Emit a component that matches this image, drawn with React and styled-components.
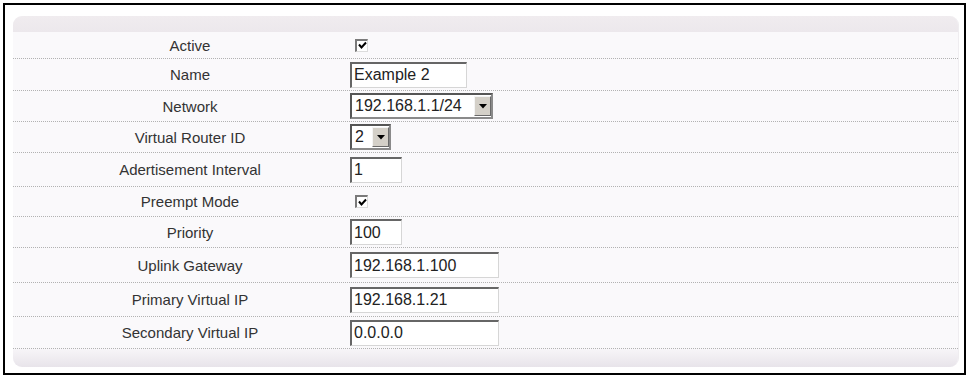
import { createGlobalStyle, styled } from "styled-components";

const GlobalStyle = createGlobalStyle`
  html, body {
    margin: 0;
    padding: 0;
    background: #ffffff;
  }
  body {
    font-family: "Liberation Sans", Arial, sans-serif;
  }
`;

const rows = [
  { label: "Active", type: "check", h: 27 },
  { label: "Name", type: "text", value: "Example 2", width: 117, h: 32 },
  { label: "Network", type: "select", value: "192.168.1.1/24", width: 143, h: 31 },
  { label: "Virtual Router ID", type: "select", value: "2", width: 41, h: 31 },
  { label: "Adertisement Interval", type: "text", value: "1", width: 52, h: 34 },
  { label: "Preempt Mode", type: "check", h: 30 },
  { label: "Priority", type: "text", value: "100", width: 52, h: 31 },
  { label: "Uplink Gateway", type: "text", value: "192.168.1.100", width: 149, h: 35 },
  { label: "Primary Virtual IP", type: "text", value: "192.168.1.21", width: 149, h: 34 },
  { label: "Secondary Virtual IP", type: "text", value: "0.0.0.0", width: 149, h: 32 },
];

const Frame = styled.div`
  margin: 3px 0 0 3px;
  width: 963px;
  height: 372px;
  border: 2px solid #000;
  padding: 11px 5px 6px 8px;
  box-sizing: border-box;
  display: flex;
`;

const Panel = styled.div`
  flex: 1;
  display: flex;
  flex-direction: column;
  background: #faf9fb;
  border-radius: 9px;
  border-right: 1px solid #efedf0;
  overflow: hidden;
`;

const HeaderBand = styled.div`
  height: 16px;
  background: linear-gradient(#f0ecef, #ece8ec);
`;

const Rows = styled.div`
  display: flex;
  flex-direction: column;
`;

const Row = styled.div`
  display: grid;
  grid-template-columns: 337px 1fr;
  align-items: center;
  height: ${(p) => p.$h}px;
  box-sizing: border-box;
  border-bottom: 1px dotted #b2b2b2;
`;

const Label = styled.div`
  padding-left: 17px;
  text-align: center;
  font-size: 15px;
  color: #333;
`;

const Value = styled.div`
  display: flex;
  align-items: center;
`;

const CheckBox = styled.span`
  margin-left: 5px;
  width: 13px;
  height: 13px;
  box-sizing: border-box;
  background: #fff;
  border-top: 2px solid #7a7a7a;
  border-left: 2px solid #7a7a7a;
  border-bottom: 1px solid #dcdcdc;
  border-right: 1px solid #dcdcdc;
  display: flex;
  align-items: center;
  justify-content: center;
`;

const TextInput = styled.input`
  width: ${(p) => p.$w}px;
  height: 26px;
  box-sizing: border-box;
  margin: 0;
  padding: 0 2px;
  font-family: "Liberation Sans", Arial, sans-serif;
  font-size: 16px;
  color: #222;
  background: #fff;
  border-top: 2px solid #666;
  border-left: 2px solid #666;
  border-bottom: 1px solid #d6d6d6;
  border-right: 1px solid #d6d6d6;
  outline: none;
`;

const SelectBox = styled.div`
  width: ${(p) => p.$w}px;
  height: 26px;
  box-sizing: border-box;
  display: flex;
  align-items: stretch;
  background: #fff;
  border-top: 2px solid #555;
  border-left: 2px solid #555;
  border-bottom: 2px solid #8a8a8a;
  border-right: 2px solid #8a8a8a;
`;

const SelectText = styled.span`
  flex: 1;
  display: flex;
  align-items: center;
  padding-left: 3px;
  font-size: 16px;
  color: #222;
  white-space: nowrap;
`;

const DropButton = styled.span`
  width: 17px;
  margin: 1px 0 1px 1px;
  box-sizing: border-box;
  background: #d4d0c8;
  border-top: 1px solid #f4f4f4;
  border-left: 1px solid #f4f4f4;
  border-bottom: 1px solid #6a6a6a;
  border-right: 1px solid #6a6a6a;
  display: flex;
  align-items: center;
  justify-content: center;
`;

const BottomBand = styled.div`
  flex: 1;
  background: linear-gradient(#f7f5f8, #e8e4ea);
`;

const Check = () => (
  <svg width="9" height="9" viewBox="0 0 9 9">
    <path d="M1 3.5 L3.5 6.5 L8 1.5" fill="none" stroke="#000" strokeWidth="2" />
  </svg>
);

const Arrow = () => (
  <svg width="8" height="5" viewBox="0 0 8 5">
    <path d="M0 0 H8 L4 4.5 Z" fill="#000" />
  </svg>
);

const Field = ({ row }) => {
  if (row.type === "check") {
    return (
      <CheckBox>
        <Check />
      </CheckBox>
    );
  }
  if (row.type === "select") {
    return (
      <SelectBox $w={row.width}>
        <SelectText>{row.value}</SelectText>
        <DropButton>
          <Arrow />
        </DropButton>
      </SelectBox>
    );
  }
  return <TextInput $w={row.width} value={row.value} readOnly />;
};

const App = () => {
  return (
    <>
      <GlobalStyle />
      <Frame>
        <Panel>
          <HeaderBand />
          <Rows>
            {rows.map((row) => (
              <Row key={row.label} $h={row.h}>
                <Label>{row.label}</Label>
                <Value>
                  <Field row={row} />
                </Value>
              </Row>
            ))}
          </Rows>
          <BottomBand />
        </Panel>
      </Frame>
    </>
  );
};

export default App;
